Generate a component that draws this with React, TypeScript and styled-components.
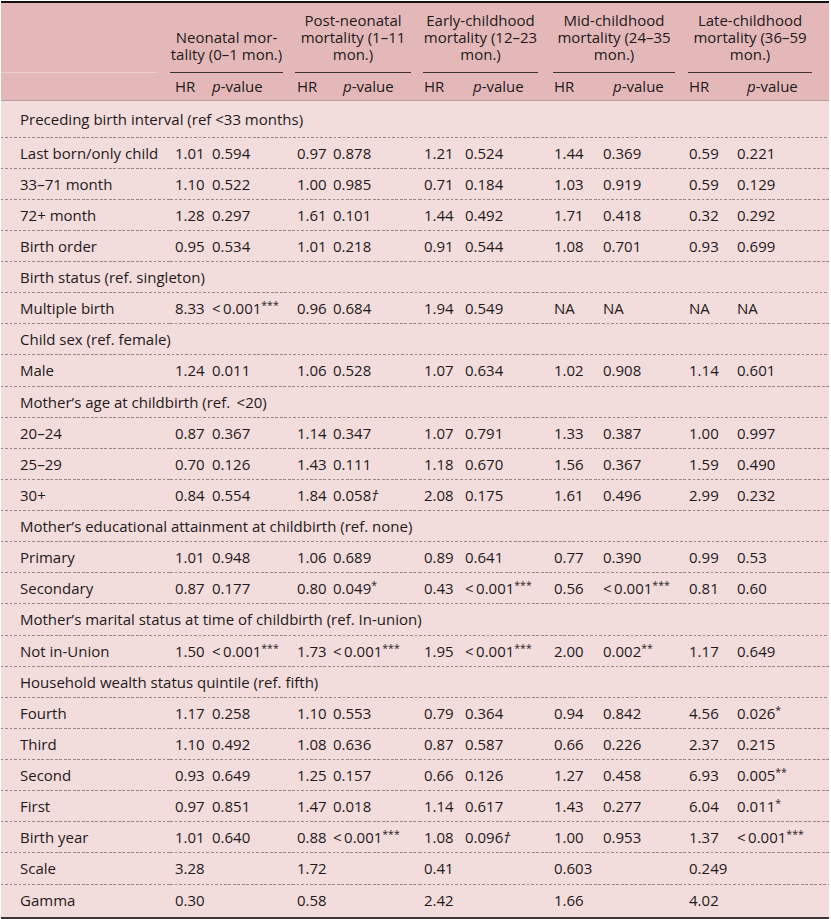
import React from "react";
import styled, { createGlobalStyle } from "styled-components";

const Global = createGlobalStyle`
  html, body { margin: 0; padding: 0; background: #ffffff; }
  body { font-family: "Open Sans", "Noto Sans", sans-serif; color: #1e1a1b; }
`;

const Table = styled.table`
  margin: 1px 0 0 1px;
  width: 828px;
  table-layout: fixed;
  border-collapse: collapse;
  border-top: 2px solid #111;
  border-bottom: 2px solid #3a3436;
  font-size: 15px;
  line-height: 17px;
`;

const Head = styled.thead`
  background: #e4b8b9;
`;

const Body = styled.tbody`
  background: #f3dcdc;
`;

const Corner = styled.th`
  padding: 0;
  vertical-align: bottom;
`;

const CornerRule = styled.div`
  height: 70px;
  margin-right: 13px;
  border-bottom: 1px solid #edcfcf;
  box-sizing: border-box;
`;

const GroupCell = styled.th<{ $l: number; $r: number }>`
  padding: 6px ${(p) => p.$r}px 0 ${(p) => p.$l}px;
  vertical-align: bottom;
  font-weight: 400;
`;

const GroupTitle = styled.div`
  text-align: center;
  white-space: nowrap;
  padding-bottom: 9px;
  border-bottom: 1px solid #3b3234;
`;

const TitleLine = styled.div`
  height: 17px;
  line-height: 17px;
`;

const SubRow = styled.tr`
  border-bottom: 1px solid #b49a9b;
`;

const SubCell = styled.th<{ $pad: number }>`
  padding: 5px 0 5px ${(p) => p.$pad}px;
  text-align: left;
  font-weight: 400;
  white-space: nowrap;
`;

const Ital = styled.i`
  font-style: italic;
`;

const dotted = `
  background-image: repeating-linear-gradient(to right, #978787 0 2.5px, transparent 2.5px 4.5px);
  background-size: 100% 1px;
  background-position: left bottom;
  background-repeat: no-repeat;
`;

const Row = styled.tr<{ $first?: boolean; $last?: boolean }>`
  height: ${(p) => (p.$first ? 37 : p.$last ? 33 : 31.14)}px;
`;

const Label = styled.td<{ $last?: boolean }>`
  padding: 0 0 0 19px;
  white-space: nowrap;
  vertical-align: middle;
  ${(p) => (p.$last ? "" : dotted)}
`;

const Cell = styled.td<{ $last?: boolean }>`
  padding: 0 0 0 5px;
  white-space: nowrap;
  vertical-align: middle;
  ${(p) => (p.$last ? "" : dotted)}
`;

const Stars = styled.sup`
  font-size: 10.5px;
  line-height: 0;
  vertical-align: 5px;
`;

const Dagger = styled.span`
  font-style: italic;
`;

type RowData =
  | { kind: "section"; label: string }
  | { kind: "data"; label: string; v: string[] }
  | { kind: "param"; label: string; v: string[] };

const rows: RowData[] = [
  { kind: "section", label: "Preceding birth interval (ref <33 months)" },
  { kind: "data", label: "Last born/only child", v: ["1.01", "0.594", "0.97", "0.878", "1.21", "0.524", "1.44", "0.369", "0.59", "0.221"] },
  { kind: "data", label: "33–71 month", v: ["1.10", "0.522", "1.00", "0.985", "0.71", "0.184", "1.03", "0.919", "0.59", "0.129"] },
  { kind: "data", label: "72+ month", v: ["1.28", "0.297", "1.61", "0.101", "1.44", "0.492", "1.71", "0.418", "0.32", "0.292"] },
  { kind: "data", label: "Birth order", v: ["0.95", "0.534", "1.01", "0.218", "0.91", "0.544", "1.08", "0.701", "0.93", "0.699"] },
  { kind: "section", label: "Birth status (ref. singleton)" },
  { kind: "data", label: "Multiple birth", v: ["8.33", "<0.001***", "0.96", "0.684", "1.94", "0.549", "NA", "NA", "NA", "NA"] },
  { kind: "section", label: "Child sex (ref. female)" },
  { kind: "data", label: "Male", v: ["1.24", "0.011", "1.06", "0.528", "1.07", "0.634", "1.02", "0.908", "1.14", "0.601"] },
  { kind: "section", label: "Mother’s age at childbirth (ref. \u2009<20)" },
  { kind: "data", label: "20–24", v: ["0.87", "0.367", "1.14", "0.347", "1.07", "0.791", "1.33", "0.387", "1.00", "0.997"] },
  { kind: "data", label: "25–29", v: ["0.70", "0.126", "1.43", "0.111", "1.18", "0.670", "1.56", "0.367", "1.59", "0.490"] },
  { kind: "data", label: "30+", v: ["0.84", "0.554", "1.84", "0.058†", "2.08", "0.175", "1.61", "0.496", "2.99", "0.232"] },
  { kind: "section", label: "Mother’s educational attainment at childbirth (ref. none)" },
  { kind: "data", label: "Primary", v: ["1.01", "0.948", "1.06", "0.689", "0.89", "0.641", "0.77", "0.390", "0.99", "0.53"] },
  { kind: "data", label: "Secondary", v: ["0.87", "0.177", "0.80", "0.049*", "0.43", "<0.001***", "0.56", "<0.001***", "0.81", "0.60"] },
  { kind: "section", label: "Mother’s marital status at time of childbirth (ref. In-union)" },
  { kind: "data", label: "Not in-Union", v: ["1.50", "<0.001***", "1.73", "<0.001***", "1.95", "<0.001***", "2.00", "0.002**", "1.17", "0.649"] },
  { kind: "section", label: "Household wealth status quintile (ref. fifth)" },
  { kind: "data", label: "Fourth", v: ["1.17", "0.258", "1.10", "0.553", "0.79", "0.364", "0.94", "0.842", "4.56", "0.026*"] },
  { kind: "data", label: "Third", v: ["1.10", "0.492", "1.08", "0.636", "0.87", "0.587", "0.66", "0.226", "2.37", "0.215"] },
  { kind: "data", label: "Second", v: ["0.93", "0.649", "1.25", "0.157", "0.66", "0.126", "1.27", "0.458", "6.93", "0.005**"] },
  { kind: "data", label: "First", v: ["0.97", "0.851", "1.47", "0.018", "1.14", "0.617", "1.43", "0.277", "6.04", "0.011*"] },
  { kind: "data", label: "Birth year", v: ["1.01", "0.640", "0.88", "<0.001***", "1.08", "0.096†", "1.00", "0.953", "1.37", "<0.001***"] },
  { kind: "param", label: "Scale", v: ["3.28", "1.72", "0.41", "0.603", "0.249"] },
  { kind: "param", label: "Gamma", v: ["0.30", "0.58", "2.42", "1.66", "4.02"] },
];

const widths = [169, 37, 85, 36, 91, 41, 89, 49, 86, 48, 97];

const groups = [
  { title: ["Neonatal mor-", "tality (0–1 mon.)"], l: 0, r: 9, pv: 5 },
  { title: ["Post-neonatal", "mortality (1–11", "mon.)"], l: 3, r: 8, pv: 15 },
  { title: ["Early-childhood", "mortality (12–23", "mon.)"], l: 4, r: 11, pv: 13 },
  { title: ["Mid-childhood", "mortality (24–35", "mon.)"], l: 4, r: 9, pv: 15 },
  { title: ["Late-childhood", "mortality (36–59", "mon.)"], l: 4, r: 17, pv: 15 },
];

function Value({ text }: { text: string }) {
  let t = text;
  let stars = "";
  let dagger = false;
  const m = t.match(/^(.*?)(\*+)$/);
  if (m) {
    t = m[1];
    stars = m[2];
  }
  if (t.endsWith("†")) {
    t = t.slice(0, -1);
    dagger = true;
  }
  if (t.startsWith("<")) t = "<\u2009" + t.slice(1);
  return (
    <>
      {t}
      {dagger && <Dagger>†</Dagger>}
      {stars && <Stars>{stars}</Stars>}
    </>
  );
}

export default function App() {
  return (
    <>
      <Global />
      <Table>
        <colgroup>
          {widths.map((w, i) => (
            <col key={i} style={{ width: w }} />
          ))}
        </colgroup>
        <Head>
          <tr>
            <Corner>
              <CornerRule />
            </Corner>
            {groups.map((g, i) => (
              <GroupCell key={i} colSpan={2} $l={g.l} $r={g.r}>
                <GroupTitle>
                  {g.title.map((line, j) => (
                    <TitleLine key={j}>{line}</TitleLine>
                  ))}
                </GroupTitle>
              </GroupCell>
            ))}
          </tr>
          <SubRow>
            <SubCell $pad={0} />
            {groups.map((g, i) => (
              <React.Fragment key={i}>
                <SubCell $pad={5}>HR</SubCell>
                <SubCell $pad={g.pv}>
                  <Ital>p</Ital>-value
                </SubCell>
              </React.Fragment>
            ))}
          </SubRow>
        </Head>
        <Body>
          {rows.map((r, i) => {
            const last = i === rows.length - 1;
            const first = i === 0;
            if (r.kind === "section") {
              return (
                <Row key={i} $first={first}>
                  <Label colSpan={11}>{r.label}</Label>
                </Row>
              );
            }
            if (r.kind === "param") {
              return (
                <Row key={i} $last={last}>
                  <Label $last={last}>{r.label}</Label>
                  {r.v.map((v, j) => (
                    <Cell key={j} colSpan={2} $last={last}>
                      {v}
                    </Cell>
                  ))}
                </Row>
              );
            }
            return (
              <Row key={i}>
                <Label>{r.label}</Label>
                {r.v.map((v, j) => (
                  <Cell key={j}>
                    <Value text={v} />
                  </Cell>
                ))}
              </Row>
            );
          })}
        </Body>
      </Table>
    </>
  );
}
